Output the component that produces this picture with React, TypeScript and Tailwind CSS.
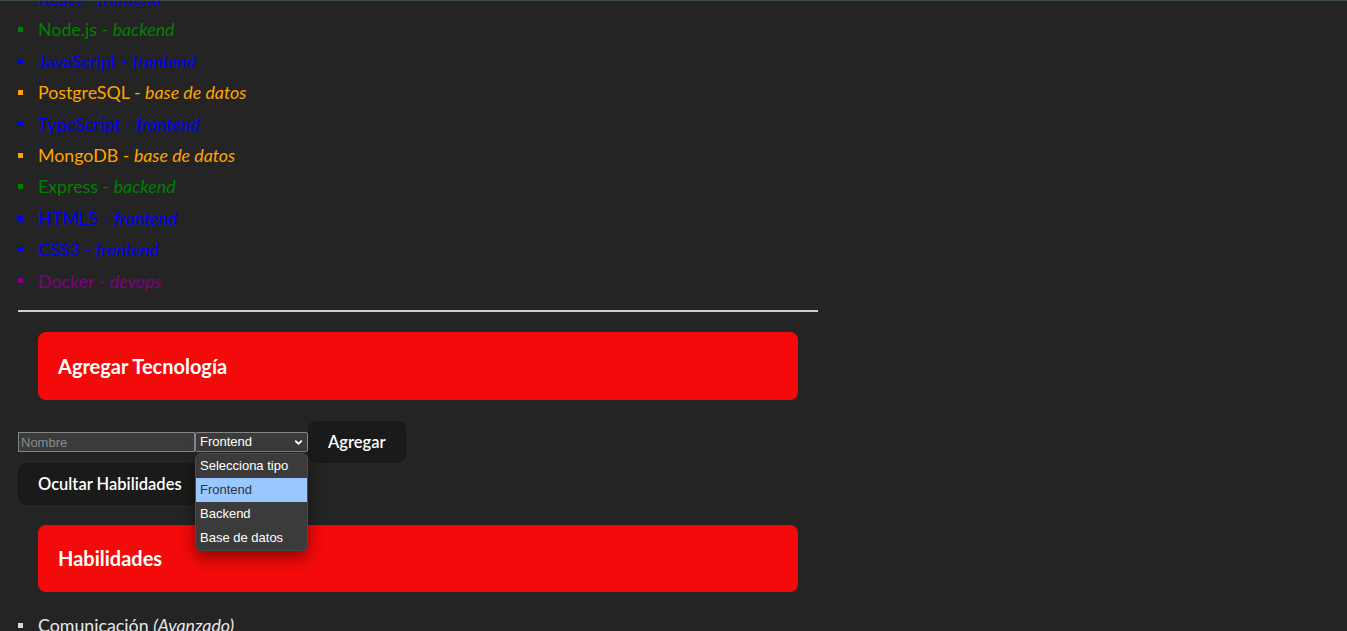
import { ChevronDown } from 'lucide-react';

const techs = [
  { name: 'React', type: 'frontend', color: 'text-[#0000ff]' },
  { name: 'Node.js', type: 'backend', color: 'text-[#008000]' },
  { name: 'JavaScript', type: 'frontend', color: 'text-[#0000ff]' },
  { name: 'PostgreSQL', type: 'base de datos', color: 'text-[#ffa500]' },
  { name: 'TypeScript', type: 'frontend', color: 'text-[#0000ff]' },
  { name: 'MongoDB', type: 'base de datos', color: 'text-[#ffa500]' },
  { name: 'Express', type: 'backend', color: 'text-[#008000]' },
  { name: 'HTML5', type: 'frontend', color: 'text-[#0000ff]' },
  { name: 'CSS3', type: 'frontend', color: 'text-[#0000ff]' },
  { name: 'Docker', type: 'devops', color: 'text-[#800080]' },
];

const options = ['Selecciona tipo', 'Frontend', 'Backend', 'Base de datos'];

function Marker() {
  return <span className="w-[5px] h-[5px] bg-current shrink-0 mr-[15px]" />;
}

export default function App() {
  return (
    <div
      className="h-[631px] overflow-hidden bg-[#242424] border-t border-[#3c4a47] text-white/90"
      style={{ fontFamily: '"Segoe UI", Lato, "Noto Sans", sans-serif' }}
    >
      <div className="w-[800px] ml-[18px] -mt-[16px]">
        {/* TECH LIST */}
        <ul>
          {techs.map((t) => (
            <li key={t.name} className={`flex items-center text-[17.8px] leading-[26.4px] mb-[5px] ${t.color}`}>
              <Marker />
              <span>
                {t.name} - <em>{t.type}</em>
              </span>
            </li>
          ))}
        </ul>

        <hr className="mt-[16px] border-0 border-t-2 border-[#cfcfcf]" />

        {/* ADD FORM */}
        <div className="mx-[20px] mt-[20px] bg-[#f40a0a] rounded-lg px-[20px] py-[20px]">
          <h2 className="text-[20px] font-bold leading-[28px] text-white">Agregar Tecnología</h2>
        </div>

        <div className="flex items-center mt-[21px]" style={{ fontFamily: '"Liberation Sans", Arial, sans-serif' }}>
          <input
            placeholder="Nombre"
            className="w-[177px] h-[20px] bg-[#3b3b3b] border border-[#858585] px-[2px] text-[13px] text-white placeholder:text-[#8a8a8a] outline-none"
          />
          <span className="relative">
            <span className="flex items-center justify-between w-[113px] h-[20px] bg-[#3b3b3b] border border-[#858585] rounded-[2px] pl-[4px] pr-[3px] text-[13px] text-white">
              Frontend
              <ChevronDown className="w-[11px] h-[11px]" strokeWidth={4} />
            </span>

            {/* OPEN DROPDOWN */}
            <div className="absolute left-0 top-[21px] w-[113px] z-10 bg-[#3b3b3b] border border-[#4a4a4a] rounded-[6px] shadow-[0_6px_16px_rgba(0,0,0,0.45)] overflow-hidden text-[13px]">
              {options.map((o) => (
                <div
                  key={o}
                  className={`h-[24px] flex items-center px-[4px] ${o === 'Frontend' ? 'bg-[#99c8ff] text-[#333]' : 'text-white'}`}
                >
                  {o}
                </div>
              ))}
            </div>
          </span>
          <button
            className="h-[42px] px-[20px] bg-[#1a1a1a] rounded-lg text-[16.5px] font-semibold text-white"
            style={{ fontFamily: '"Segoe UI", Lato, "Noto Sans", sans-serif' }}
          >
            Agregar
          </button>
        </div>

        <button className="h-[42px] px-[20px] bg-[#1a1a1a] rounded-lg text-[16.5px] font-semibold text-white">
          Ocultar Habilidades
        </button>

        {/* SKILLS */}
        <div className="mx-[20px] mt-[20px] bg-[#f40a0a] rounded-lg px-[20px] py-[20px]">
          <h2 className="text-[20px] font-bold leading-[27px] text-white">Habilidades</h2>
        </div>

        <ul className="mt-[20px]">
          <li className="flex items-center text-[17.8px] leading-[26.4px] text-white/90">
            <span className="w-[5px] h-[5px] bg-[#d9d9d9] shrink-0 mr-[15px]" />
            <span>
              Comunicación <em>(Avanzado)</em>
            </span>
          </li>
        </ul>
      </div>
    </div>
  );
}
